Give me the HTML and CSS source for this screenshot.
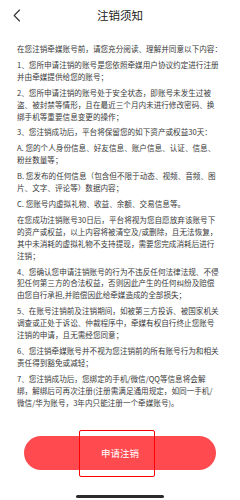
FILE: index.html
```html
<!DOCTYPE html>
<html lang="zh-CN">
<head>
<meta charset="utf-8">
<title>注销须知</title>
<link rel="stylesheet" href="styles.css">
</head>
<body>
<div class="page">
  <header class="nav">
    <svg class="back" width="8" height="13" viewBox="0 0 8 13"><polyline points="6.5,1 1.2,6.5 6.5,12" fill="none" stroke="#333" stroke-width="1.1" stroke-linecap="round" stroke-linejoin="round"/></svg>
    <h1 class="title">注销须知</h1>
  </header>
  <main class="content">
    <p>在您注销牵媒账号前，请您充分阅读、理解并同意以下内容：</p>
    <p>1、您所申请注销的账号是您依照牵媒用户协议约定进行注册<br>并由牵媒提供给您的账号；</p>
    <p>2、您所申请注销的账号处于安全状态，即账号未发生过被<br>盗、被封禁等情形，且在最近三个月内未进行修改密码、换<br>绑手机等重要信息变更的操作；</p>
    <p>3、您注销成功后，平台将保留您的如下资产或权益30天：</p>
    <p>A. 您的个人身份信息、好友信息、账户信息、认证、信息、<br>粉丝数量等；</p>
    <p>B. 您发布的任何信息（包含但不限于动态、视频、音频、图<br>片、文字、评论等）数据内容；</p>
    <p>C. 您账号内虚拟礼物、收益、余额、交易信息等。</p>
    <p>在您成功注销账号30日后，平台将视为您自愿放弃该账号下<br>的资产或权益，以上内容将被清空及/或删除，且无法恢复，<br>其中未消耗的虚拟礼物不支持提现，需要您完成消耗后进行<br>注销；</p>
    <p>4、您确认您申请注销账号的行为不违反任何法律法规、不侵<br>犯任何第三方的合法权益，否则因此产生的任何纠纷及赔偿<br>由您自行承担,并赔偿因此给牵媒造成的全部损失；</p>
    <p>5、在账号注销前及注销期间，如被第三方投诉、被国家机关<br>调查或正处于诉讼、仲裁程序中，牵媒有权自行终止您账号<br>注销的申请，且无需经您同意；</p>
    <p>6、您注销牵媒账号并不视为您注销前的所有账号行为和相关<br>责任得到豁免或减轻；</p>
    <p>7、您注销成功后，您绑定的手机/微信/QQ等信息将会解<br>绑，解绑后可再次注册(注册需满足通用规定，如同一手机/<br>微信/华为账号，3年内只能注册一个牵媒账号)。</p>
  </main>
  <footer class="footer">
    <div class="btn-wrap">
      <button class="btn" type="button">申请注销</button>
      <span class="mark"></span>
    </div>
    <div class="home-bar"></div>
  </footer>
</div>
</body>
</html>
```

FILE: styles.css
```css
* { box-sizing: border-box; }
html, body {
  margin: 0;
  padding: 0;
  background: #fff;
}
body {
  font-family: "Noto Sans CJK SC", "Noto Sans", sans-serif;
  color: #333;
}
.page {
  height: 500px;
  display: flex;
  flex-direction: column;
  overflow: hidden;
}
.nav {
  position: relative;
  height: 30px;
  display: flex;
  align-items: center;
  justify-content: center;
  flex-shrink: 0;
}
.back {
  position: absolute;
  left: 13px;
  top: 9px;
}
.title {
  margin: 0;
  font-size: 11.5px;
  font-weight: 400;
  color: #222;
  line-height: 14px;
}
.content {
  margin-top: 13px;
  padding: 0 17px;
  font-size: 7.6px;
  line-height: 11.9px;
  color: #3a3a3a;
}
.content p {
  margin: 0 0 4px;
  white-space: nowrap;
}
.footer {
  margin-top: auto;
  display: flex;
  flex-direction: column;
  align-items: center;
  padding-bottom: 2px;
}
.btn-wrap {
  position: relative;
  width: 192px;
}
.btn {
  display: block;
  width: 100%;
  height: 34px;
  border: 0;
  border-radius: 17px;
  background: #ff4b50;
  color: #fff;
  font-family: "Noto Sans CJK SC", "Noto Sans", sans-serif;
  font-size: 9.5px;
  padding: 0;
}
.mark {
  position: absolute;
  left: 55px;
  top: -6px;
  width: 76px;
  height: 47px;
  border: 1.3px solid #f00;
  border-radius: 2px;
}
.home-bar {
  margin-top: 25px;
  width: 88px;
  height: 3px;
  border-radius: 2px;
  background: #2b2b2b;
}
```
